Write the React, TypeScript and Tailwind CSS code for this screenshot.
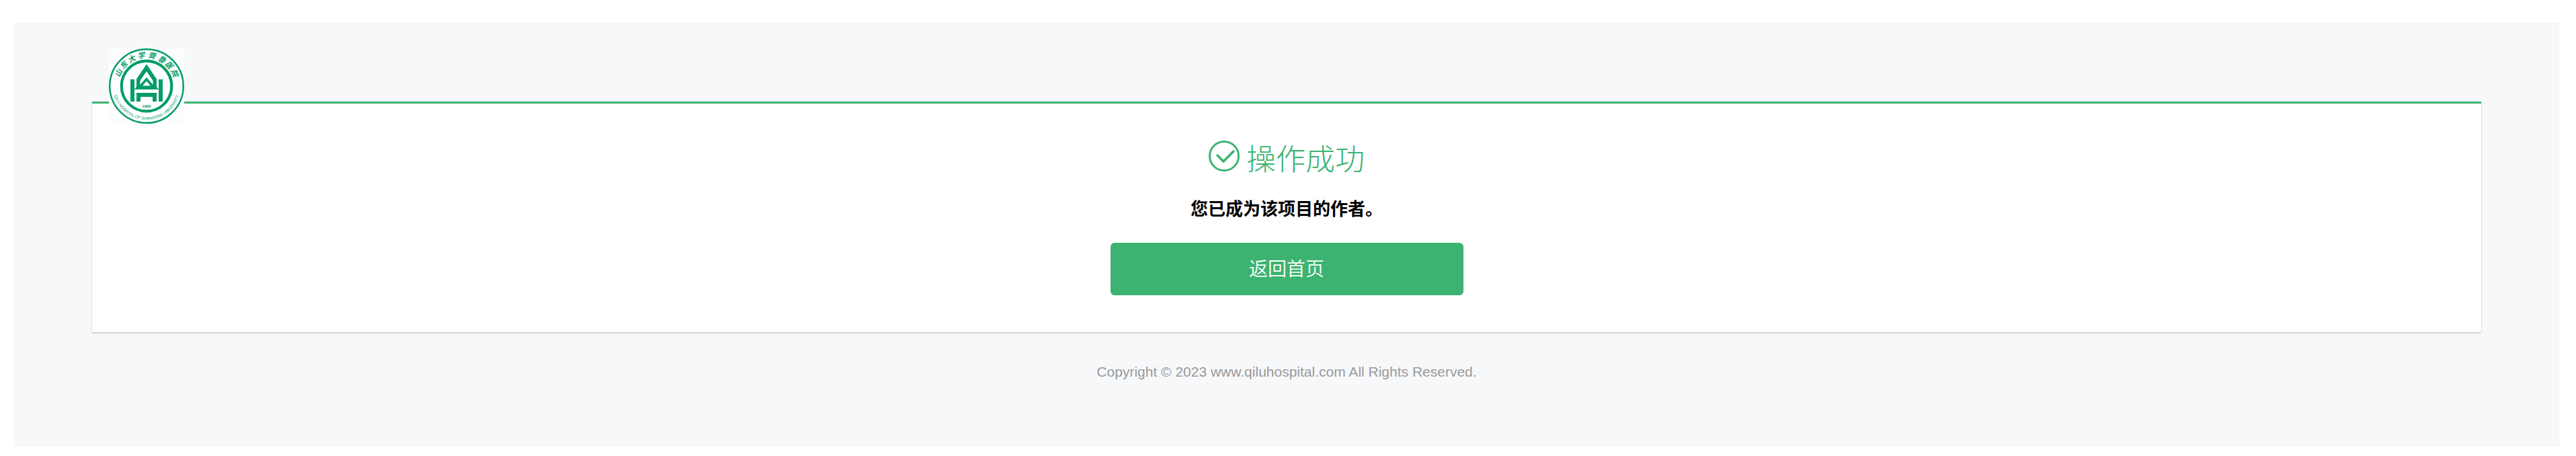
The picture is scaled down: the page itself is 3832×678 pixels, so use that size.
function Logo() {
  const chars: [string, number][] = [
    ["山", -65], ["东", -47], ["大", -29], ["学", -10], ["齊", 10], ["魯", 30], ["医", 47], ["院", 65],
  ];
  return (
    <svg viewBox="0 0 112 112" className="block h-28 w-28 bg-[#fdfdfd]" role="img" aria-label="山东大学齐鲁医院">
      <defs>
        <path id="lower" d="M7 66 A50 50 0 0 0 105 66" />
      </defs>
      <circle cx="56" cy="56" r="54.75" fill="#fff" stroke="#049c67" strokeWidth="2.5" />
      <circle cx="56" cy="56" r="37.3" fill="none" stroke="#049c67" strokeWidth="4.2" />
      <g fill="#049c67">
        <path fillRule="evenodd" d="M56 23.5 71 45.5V57L74 61H38L41 57V45.5ZM56 34 46.5 48V54L56 43 65.5 54V48ZM56 48.5 50 55.5H62Z" />
        <path d="M32 46H38V79H32ZM74 46H80V79H74ZM41 66H71V79H65V72H47V79H41Z" />
        <text x="56" y="87.5" textAnchor="middle" className="font-['Liberation_Sans'] text-[6px] font-bold">1890</text>
        {chars.map(([c, a]) => (
          <text key={c} x="56" y="14" textAnchor="middle" transform={`rotate(${a} 56 56)`} className="font-['Noto_Sans_CJK_SC',sans-serif] text-[11px] font-bold italic">
            {c}
          </text>
        ))}
        <text textAnchor="middle" className="font-['Liberation_Sans'] text-[6px]">
          <textPath href="#lower" startOffset="50%">QILU HOSPITAL OF SHANDONG UNIVERSITY</textPath>
        </text>
      </g>
    </svg>
  );
}

export default function App() {
  return (
    <div className="bg-white pt-[34px] pr-[25px] pb-[14px] pl-[21px] font-['Liberation_Sans','Noto_Sans_CJK_SC',sans-serif]">
      <div className="border border-[#f3f4f5] bg-[#f6f8fa] px-[115px] pt-[116px] pb-24">
        <main className="relative border-t-3 border-[#3cb371] bg-white pt-12 pb-[55px] text-center shadow-[0_1px_2px_rgba(100,0,20,0.3)]">
          <a href="#" className="absolute -top-[82px] left-[25px]">
            <Logo />
          </a>
          <h1 className="flex items-center justify-center gap-[10px] font-['Noto_Sans_CJK_SC',sans-serif] text-[44px] leading-[64px] font-light text-[#3cb371]">
            <svg viewBox="0 0 46 46" className="mb-1 h-[46px] w-[46px]" fill="none" stroke="currentColor" strokeWidth="3" strokeLinecap="round" aria-hidden="true">
              <circle cx="23" cy="23" r="21.5" />
              <path d="M13 22 22 31 37 16" strokeWidth="3.5" />
            </svg>
            操作成功
          </h1>
          <p className="mt-[25px] text-[26px] leading-[40px] font-bold text-black">您已成为该项目的作者。</p>
          <button type="button" className="mt-[30px] h-[78px] w-[525px] rounded-md bg-[#3cb371] pb-1 font-['Noto_Sans_CJK_SC',sans-serif] text-[28px] font-[350] text-white">
            返回首页
          </button>
        </main>
        <footer className="mt-[45px] text-center text-[21px] leading-7 text-[#999]">
          Copyright © 2023 www.qiluhospital.com All Rights Reserved.
        </footer>
      </div>
    </div>
  );
}
